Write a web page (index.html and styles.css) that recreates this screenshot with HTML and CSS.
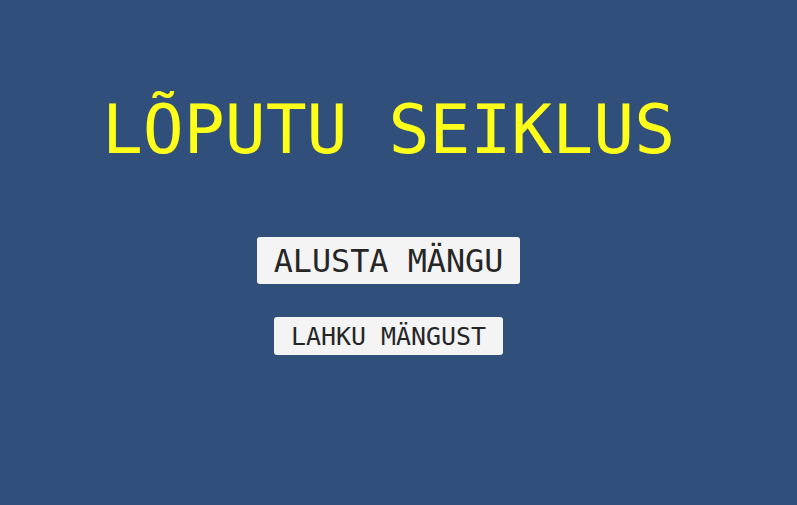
FILE: index.html
```html
<!DOCTYPE html>
<html lang="et">
<head>
<meta charset="utf-8">
<title>Lõputu seiklus</title>
<link rel="stylesheet" href="styles.css">
</head>
<body>
<main class="menu">
  <h1 class="title">LÕPUTU SEIKLUS</h1>
  <button class="btn btn-start">ALUSTA MÄNGU</button>
  <button class="btn btn-quit">LAHKU MÄNGUST</button>
</main>
</body>
</html>
```
FILE: styles.css
```css
html, body {
  margin: 0;
  padding: 0;
  background: #304f7a;
  height: 100%;
}
.menu {
  width: 777px;
  height: 505px;
  display: flex;
  flex-direction: column;
  align-items: center;
  padding-top: 96px;
  box-sizing: border-box;
  font-family: "DejaVu Sans Mono", "Liberation Mono", monospace;
}
.title {
  margin: 0;
  font-size: 68px;
  line-height: 68px;
  font-weight: normal;
  color: #ffff1a;
  white-space: nowrap;
}
.btn {
  display: flex;
  align-items: center;
  justify-content: center;
  border: none;
  border-radius: 3px;
  background: #f4f4f5;
  color: #262626;
  font-family: inherit;
  padding: 0;
  margin: 0;
}
.btn-start {
  margin-top: 73px;
  height: 47px;
  font-size: 31.8px;
  width: 263px;
}
.btn-quit {
  margin-top: 33px;
  height: 38px;
  font-size: 24.9px;
  width: 229px;
}
```
